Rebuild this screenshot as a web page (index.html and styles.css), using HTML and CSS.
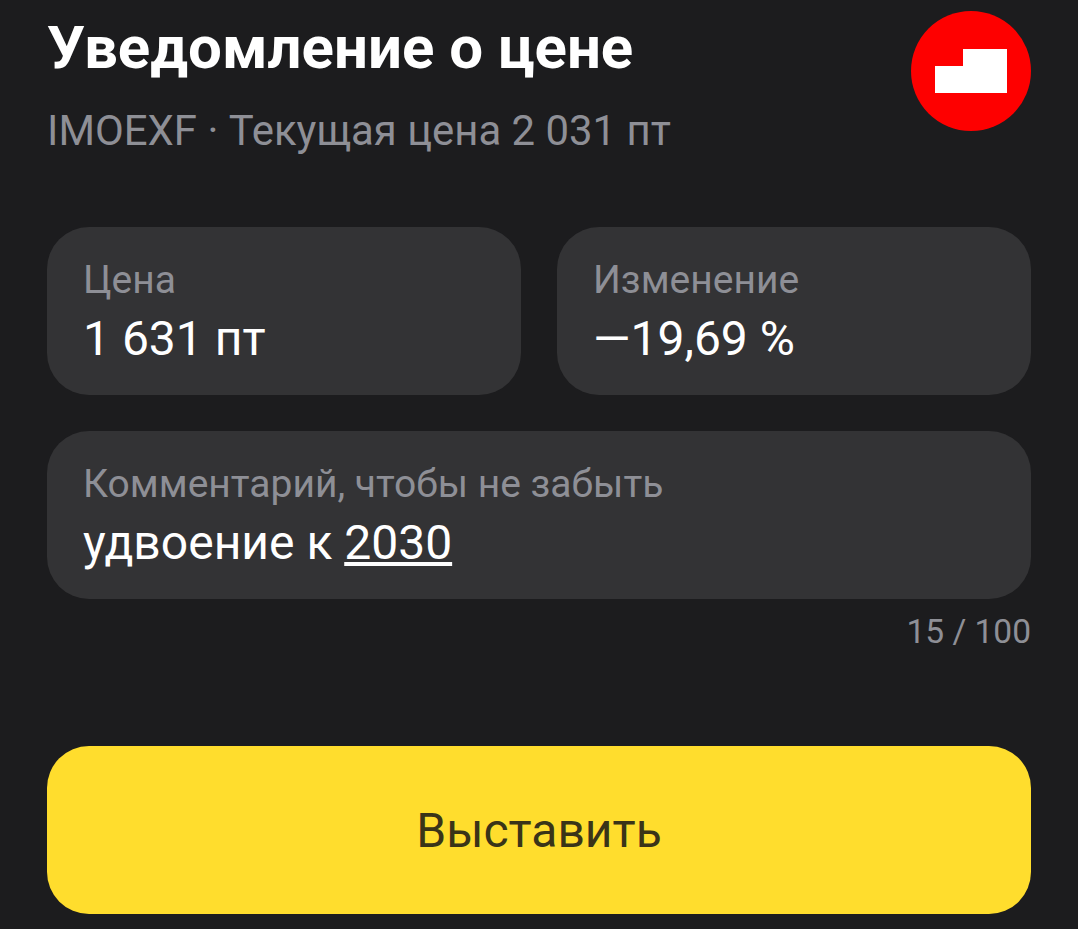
FILE: index.html
```html
<!DOCTYPE html>
<html lang="ru">
<head>
  <meta charset="UTF-8" />
  <title>Уведомление о цене</title>
  <link rel="stylesheet" href="styles.css">
</head>
<body>
  <div class="container">
    <div class="header">
      <div class="header-text">
        <h1>Уведомление о цене</h1>
        <div class="subtitle">IMOEXF · Текущая цена 2 031 пт</div>
      </div>
      <div class="logo">
        <svg width="72" height="44" viewBox="0 0 72 44">
          <path d="M0 17H28V0H72V44H0Z" fill="#fff" />
        </svg>
      </div>
    </div>

    <div class="fields">
      <div class="field">
        <div class="field-label">Цена</div>
        <div class="field-value">1 631 пт</div>
      </div>
      <div class="field">
        <div class="field-label">Изменение</div>
        <div class="field-value">—19,69 %</div>
      </div>
    </div>

    <div class="field field-wide">
      <div class="field-label">Комментарий, чтобы не забыть</div>
      <div class="field-value">удвоение к <u>2030</u></div>
    </div>
    <div class="counter">15 / 100</div>

    <button class="button-main">Выставить</button>
  </div>
</body>
</html>
```

FILE: styles.css
```css
body {
  background-color: #1c1c1e;
  font-family: 'Roboto', sans-serif;
  margin: 0;
  padding: 0;
  overflow: hidden;
  color: #fff;
}

.container {
  height: 929px;
  box-sizing: border-box;
  padding: 11px 47px 0;
  display: flex;
  flex-direction: column;
}

.header {
  display: flex;
  justify-content: space-between;
  align-items: flex-start;
  height: 216px;
}

h1 {
  font-size: 60px;
  line-height: 70px;
  font-weight: 700;
  margin: 2px 0 0;
}

.subtitle {
  font-size: 41.9px;
  line-height: 48px;
  margin-top: 24px;
  color: #8e8f96;
}

.logo {
  width: 120px;
  height: 120px;
  border-radius: 50%;
  background-color: #fe0000;
  display: flex;
  align-items: center;
  justify-content: center;
}

.fields {
  display: flex;
  gap: 36px;
  margin-bottom: 36px;
}

.field {
  flex: 1;
  height: 168px;
  box-sizing: border-box;
  padding: 30px 37px 0;
  background-color: #333335;
  border-radius: 42px;
}

.field-wide {
  flex: none;
}

.field-label {
  font-size: 39px;
  line-height: 46px;
  color: #8e8f96;
  margin-left: -1px;
}

.field-value {
  font-size: 48px;
  line-height: 58px;
  margin-top: 7px;
  margin-left: -1px;
}

.counter {
  text-align: right;
  font-size: 33.5px;
  line-height: 40px;
  margin-top: 13px;
  color: #8e8f96;
}

.button-main {
  margin-top: 94px;
  height: 168px;
  border: none;
  border-radius: 42px;
  background-color: #ffdd2d;
  color: #3a3418;
  font-family: 'Roboto', sans-serif;
  font-size: 48px;
}
```
